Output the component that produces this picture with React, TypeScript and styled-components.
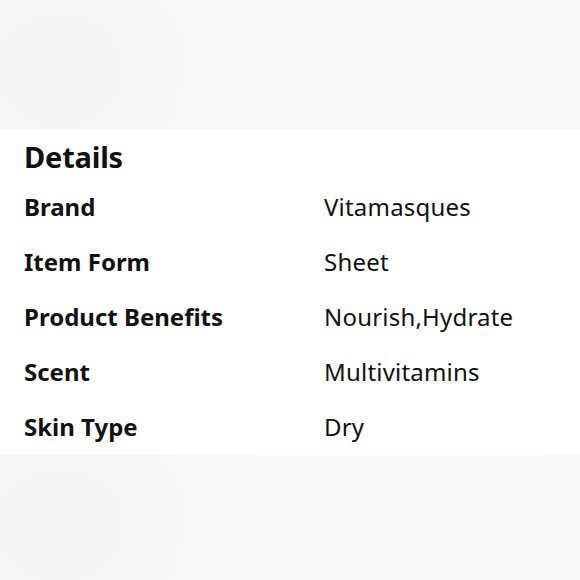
import * as React from "react";
import styled, { createGlobalStyle } from "styled-components";

const GlobalStyle = createGlobalStyle`
  html, body {
    margin: 0;
    padding: 0;
    background: #f7f7f7;
  }
`;

const Page = styled.div`
  width: 580px;
  height: 580px;
  display: flex;
  flex-direction: column;
  font-family: "Noto Sans", "Open Sans", sans-serif;
  color: #111;
  overflow: hidden;
`;

const Backdrop = styled.div`
  flex: 0 0 129px;
  background:
    radial-gradient(ellipse 160px 140px at 60px 70px, #f3f3f3 0%, rgba(243, 243, 243, 0) 100%),
    radial-gradient(ellipse 260px 120px at 400px 90px, #f9f9f9 0%, rgba(249, 249, 249, 0) 100%),
    #f8f8f8;
`;

const Panel = styled.section`
  flex: 0 0 322px;
  background: #fff;
  padding: 8px 0 0 24px;
  box-sizing: border-box;
`;

const Title = styled.h2`
  margin: 0;
  font-size: 29px;
  font-weight: 700;
  line-height: 40px;
  letter-spacing: -0.2px;
`;

const Table = styled.dl`
  margin: 2px 0 0;
  display: grid;
  grid-template-columns: 300px 1fr;
  grid-auto-rows: 55px;
  align-items: center;
`;

const Label = styled.dt`
  font-size: 24px;
  font-weight: 700;
`;

const Value = styled.dd`
  margin: 0;
  font-size: 24px;
  font-weight: 400;
  letter-spacing: 0.2px;
`;

const details: Array<[string, string]> = [
  ["Brand", "Vitamasques"],
  ["Item Form", "Sheet"],
  ["Product Benefits", "Nourish,Hydrate"],
  ["Scent", "Multivitamins"],
  ["Skin Type", "Dry"]
];

const App: React.FC = () => (
  <Page>
    <GlobalStyle />
    <Backdrop />
    <Panel>
      <Title>Details</Title>
      <Table>
        {details.map(([label, value]) => (
          <React.Fragment key={label}>
            <Label>{label}</Label>
            <Value>{value}</Value>
          </React.Fragment>
        ))}
      </Table>
    </Panel>
    <Backdrop />
  </Page>
);

export default App;
